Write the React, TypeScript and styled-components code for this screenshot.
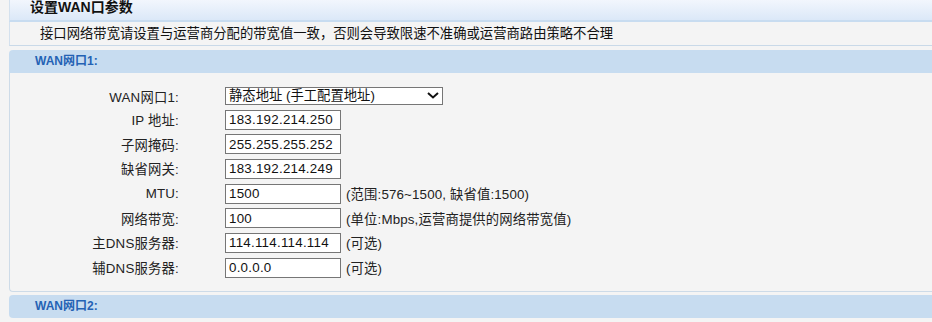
import React, { FC } from 'react'
import styled, { createGlobalStyle } from 'styled-components'

const GlobalStyle = createGlobalStyle`
    body {
        margin: 0;
        background: #f4f4f4;
        font-family: "Liberation Sans", "Noto Sans CJK SC", sans-serif;
        font-size: 10pt;
        color: #222;
    }
`

interface Field {
    label: string
    value: string
    hint?: string
}

const fields: Field[] = [
    { label: 'IP 地址:', value: '183.192.214.250' },
    { label: '子网掩码:', value: '255.255.255.252' },
    { label: '缺省网关:', value: '183.192.214.249' },
    { label: 'MTU:', value: '1500', hint: '(范围:576~1500, 缺省值:1500)' },
    { label: '网络带宽:', value: '100', hint: '(单位:Mbps,运营商提供的网络带宽值)' },
    { label: '主DNS服务器:', value: '114.114.114.114', hint: '(可选)' },
    { label: '辅DNS服务器:', value: '0.0.0.0', hint: '(可选)' },
]

const App: FC = () => {
    return (
        <Page>
            <GlobalStyle />
            <Header>设置WAN口参数</Header>
            <Note>接口网络带宽请设置与运营商分配的带宽值一致，否则会导致限速不准确或运营商路由策略不合理</Note>
            <SectionBar>WAN网口1:</SectionBar>
            <Panel>
                <SelectRow>
                    <Label>WAN网口1:</Label>
                    <SelectBox>
                        <span>静态地址 (手工配置地址)</span>
                        <Chevron width="12" height="7" viewBox="0 0 12 7">
                            <path d="M1 1 L6 5.5 L11 1" fill="none" stroke="#111" strokeWidth="2" />
                        </Chevron>
                    </SelectBox>
                </SelectRow>
                {fields.map((f) => (
                    <Row key={f.label}>
                        <Label>{f.label}</Label>
                        <Input defaultValue={f.value} />
                        {f.hint && <Hint>{f.hint}</Hint>}
                    </Row>
                ))}
            </Panel>
            <SectionBar $closed>WAN网口2:</SectionBar>
        </Page>
    )
}
export default App

const Page = styled.div`
    margin-left: 9px;
    overflow: hidden;
`
const Header = styled.div`
    height: 20px;
    line-height: 14px;
    padding-left: 20px;
    border-left: 1px solid #d4e1ee;
    border-bottom: 2px solid #c8dcf0;
    background: linear-gradient(#f2f6fd, #dbe8f8);
    font-weight: bold;
    font-size: 14px;
    color: #111;
`
const Note = styled.div`
    height: 23px;
    line-height: 23px;
    padding-left: 30px;
    border-left: 1px solid #d4e1ee;
    border-bottom: 1px solid #c9d9e8;
    color: #111;
    white-space: nowrap;
`
const SectionBar = styled.div<{ $closed?: boolean }>`
    margin-top: ${(p) => (p.$closed ? '3px' : '4px')};
    height: 23px;
    line-height: 23px;
    padding-left: 26px;
    background: #c7dcf0;
    border-radius: ${(p) => (p.$closed ? '4px 0 0 4px' : '4px 0 0 0')};
    color: #2462b4;
    font-weight: bold;
    font-size: 9pt;
`
const Panel = styled.div`
    padding: 14px 0 13px;
    border-left: 1px solid #cddbe8;
    border-bottom: 1px solid #cddbe8;
    border-radius: 0 0 0 4px;
`
const Row = styled.div`
    display: flex;
    align-items: center;
    height: 20px;
    margin-top: 4.67px;
`
const SelectRow = styled(Row)`
    height: 18px;
    margin-top: 0;
`
const Label = styled.label`
    width: 169px;
    margin-right: 46px;
    text-align: right;
    white-space: nowrap;
    letter-spacing: 0.2px;
`
const Input = styled.input`
    box-sizing: border-box;
    width: 116px;
    height: 20px;
    padding: 0 3px;
    border: 1px solid #767676;
    background: #fff;
    font-family: inherit;
    font-size: 10pt;
    letter-spacing: 0.25px;
    color: #111;
    outline: none;
`
const SelectBox = styled.div`
    position: relative;
    box-sizing: border-box;
    width: 218px;
    height: 18px;
    line-height: 16px;
    padding-left: 3px;
    border: 1px solid #767676;
    background: #fff;
    color: #111;
    white-space: nowrap;
`
const Chevron = styled.svg`
    position: absolute;
    right: 3px;
    top: 4px;
`
const Hint = styled.span`
    margin-left: 5px;
    white-space: nowrap;
    letter-spacing: 0.15px;
    color: #222;
`
